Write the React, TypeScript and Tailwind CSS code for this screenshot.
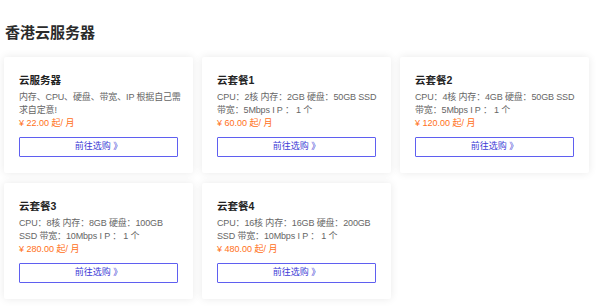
import React from "react";

const plans = [
  { title: "云服务器", desc: ["内存、CPU、硬盘、带宽、IP 根据自己需", "求自定意!"], price: "¥ 22.00 起/ 月" },
  { title: "云套餐1", desc: ["CPU：2核 内存：2GB 硬盘：50GB SSD", "带宽：5Mbps I P ： 1 个"], price: "¥ 60.00 起/ 月" },
  { title: "云套餐2", desc: ["CPU：4核 内存：4GB 硬盘：50GB SSD", "带宽：5Mbps I P ： 1 个"], price: "¥ 120.00 起/ 月" },
  { title: "云套餐3", desc: ["CPU：8核 内存：8GB 硬盘：100GB", "SSD 带宽：10Mbps I P ： 1 个"], price: "¥ 280.00 起/ 月" },
  { title: "云套餐4", desc: ["CPU：16核 内存：16GB 硬盘：200GB", "SSD 带宽：10Mbps I P ： 1 个"], price: "¥ 480.00 起/ 月" },
];

export default function App() {
  return (
    <div
      className="w-[600px] h-[307px] bg-white overflow-hidden pl-[4px] pt-[23px]"
      style={{ fontFamily: '"Liberation Sans", Arial, "Noto Sans CJK SC", sans-serif' }}
    >
      <h1 className="text-[15px] leading-[20px] font-bold text-[#2b2b2b] pl-[1px] mb-[14px]">香港云服务器</h1>
      <div className="grid grid-cols-[189px_189px_189px] gap-x-[9px] gap-y-[10px]">
        {plans.map((p) => (
          <div
            key={p.title}
            className="bg-white rounded-[2px] shadow-[0_0_8px_rgba(0,0,0,0.09)] px-[15px] pt-[16px] pb-[16px]"
          >
            <div className="text-[10.5px] leading-[14px] font-bold text-[#222]">{p.title}</div>
            <div className="mt-[4px] text-[9px] leading-[13px] text-[#666] tracking-[-0.15px]">
              {p.desc.map((d) => (
                <div key={d} className="whitespace-nowrap">{d}</div>
              ))}
            </div>
            <div className="text-[9px] leading-[12px] text-[#ff7020]">{p.price}</div>
            <button className="mt-[8px] w-full h-[20px] border border-[#5f5ff0] rounded-[1px] text-[9px] text-[#3d3dd6] flex items-center justify-center bg-white">
              前往选购 》
            </button>
          </div>
        ))}
      </div>
    </div>
  );
}
